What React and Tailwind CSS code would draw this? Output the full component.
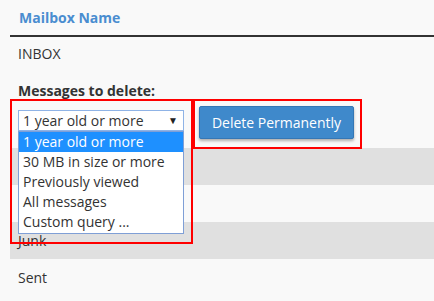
import { useState } from 'react';

const options = [
  '1 year old or more',
  '30 MB in size or more',
  'Previously viewed',
  'All messages',
  'Custom query ...',
];

// first two names sit under the open dropdown, so they are left blank
const rows = [
  { name: '', shaded: true },
  { name: '', shaded: false },
  { name: 'Junk', shaded: true },
  { name: 'Sent', shaded: false },
];

export default function App() {
  const [selected] = useState(0);

  return (
    <div className="w-[434px] h-[301px] overflow-hidden bg-[#f9f9f9] pl-[10px] text-[14px] text-[#333] font-['Open_Sans',sans-serif]">
      <div className="h-[35px] flex items-center px-[9px] font-bold text-[#4a8dd0]">Mailbox Name</div>
      <div className="h-[2px] bg-[#333]" />

      <div className="px-[8px] pt-[7px] h-[111px]">
        <div className="leading-[20px]">INBOX</div>
        <div className="mt-[19px] leading-[16px] font-bold">Messages to delete:</div>

        <div className="-ml-[8px] flex items-start h-[50px]">
          <div className="relative z-10 w-[183px] h-[50px] pl-[8px] pt-[11px]">
            <div className="absolute top-0 left-0 w-[183px] h-[145px] border-[2px] border-[#f00] pointer-events-none" />
            <div className="relative w-[166px] h-[21px] bg-white border border-[#8fb3e6] flex items-center pl-[4px] leading-[19px]">
              <span>{options[selected]}</span>
              <span className="ml-auto mr-[5px] text-[10px] text-[#222]">▼</span>
            </div>
            <ul className="relative w-[166px] bg-white border border-[#7f9fd6] leading-[20px] pb-[1px]">
              {options.map((o, i) => (
                <li
                  key={o}
                  className={i === selected ? 'pl-[4px] bg-[#1e90ff] text-white' : 'pl-[4px]'}
                >
                  {o}
                </li>
              ))}
            </ul>
          </div>

          <div className="w-[169px] h-[50px] border-[2px] border-[#f00] pl-[4px] pt-[5px]">
            <button className="w-[155px] h-[33px] bg-[#3f89cb] border border-[#3577b5] rounded-[2px] text-white shadow-[0_2px_3px_rgba(0,0,0,0.3)]">
              Delete Permanently
            </button>
          </div>
        </div>
      </div>

      {rows.map((r, i) => (
        <div
          key={i}
          className={
            r.shaded
              ? 'h-[37px] flex items-center px-[8px] bg-[#e0e0e0]'
              : 'h-[37px] flex items-center px-[8px]'
          }
        >
          {r.name}
        </div>
      ))}
    </div>
  );
}
